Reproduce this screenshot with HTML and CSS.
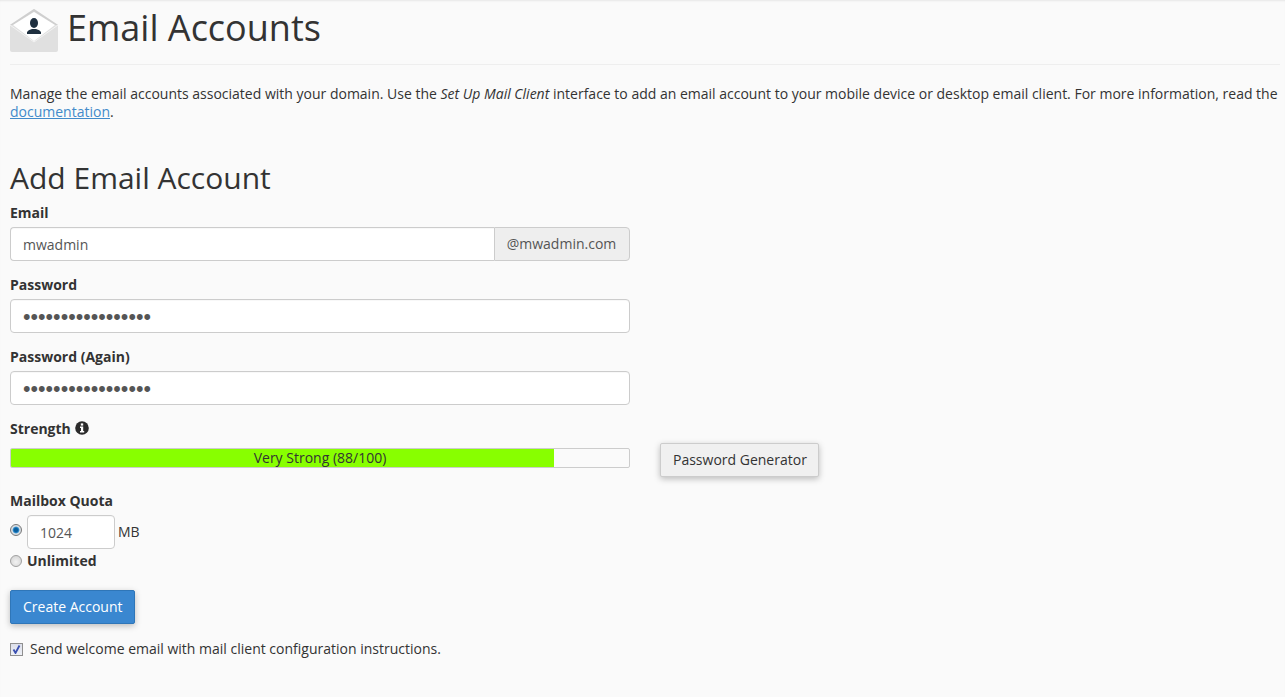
FILE: index.html
```html
<!DOCTYPE html>
<html lang="en">
<head>
<meta charset="utf-8">
<title>Email Accounts</title>
<link rel="stylesheet" href="styles.css">
</head>
<body>
<main class="page">
  <header class="page-header">
    <svg class="page-icon" width="48" height="44" viewBox="0 0 48 44" aria-hidden="true">
      <path d="M0 16 L24 0 L48 16 L48 41 Q48 43 46 43 L2 43 Q0 43 0 41 Z" fill="#e0e0e0"/>
      <path d="M24 0 L48 16 L45 16 L24 2.5 L3 16 L0 16 Z" fill="#cfcfcf"/>
      <path d="M3 16 L24 3 L45 16 L24 32 Z" fill="#fff"/>
      <path d="M0 16 L24 33 L48 16" fill="none" stroke="#f2f2f2" stroke-width="1"/>
      <ellipse cx="24" cy="14" rx="4" ry="5" fill="#1f3040"/>
      <path d="M17 25 L17 23 Q18 21 22 20 L26 20 Q30 21 31 23 L31 25 Z" fill="#1f3040"/>
    </svg>
    <h1 class="page-title">Email Accounts</h1>
  </header>
  <p class="intro">Manage the email accounts associated with your domain. Use the <em>Set Up Mail Client</em> interface to add an email account to your mobile device or desktop email client. For more information, read the <a href="#">documentation</a>.</p>
  <h2 class="section-title">Add Email Account</h2>
  <form class="form">
    <div class="group">
      <label class="label">Email</label>
      <div class="input-group">
        <input class="input input-joined" type="text" value="mwadmin">
        <span class="addon">@mwadmin.com</span>
      </div>
    </div>
    <div class="group">
      <label class="label">Password</label>
      <input class="input input-secret" type="password" value="aaaaaaaaaaaaaaaaa">
    </div>
    <div class="group">
      <label class="label">Password (Again)</label>
      <input class="input input-secret" type="password" value="aaaaaaaaaaaaaaaaa">
    </div>
    <div class="group group-strength">
      <label class="label">Strength
        <svg class="info" width="14" height="14" viewBox="0 0 14 14" aria-hidden="true">
          <circle cx="7" cy="7" r="6.8" fill="#2b2b2b"/>
          <rect x="5.8" y="2.4" width="2.4" height="2.2" fill="#fff"/>
          <path d="M5 5.6 H8.2 V10 H9.2 V11.4 H5 V10 H6 V7 H5 Z" fill="#fff"/>
        </svg>
      </label>
      <div class="strength-row">
        <div class="progress">
          <div class="progress-bar" style="width: 87.8%"></div>
          <span class="progress-text">Very Strong (88/100)</span>
        </div>
        <button class="btn btn-default" type="button">Password Generator</button>
      </div>
    </div>
    <div class="group group-quota">
      <label class="label">Mailbox Quota</label>
      <div class="quota-row">
        <input class="radio" type="radio" name="quota" checked>
        <input class="input input-quota" type="text" value="1024">
        <span class="unit">MB</span>
      </div>
      <div class="unlimited-row">
        <input class="radio" type="radio" name="quota">
        <strong>Unlimited</strong>
      </div>
    </div>
    <button class="btn btn-primary" type="button">Create Account</button>
    <div class="welcome">
      <span class="checkbox">
        <svg width="9" height="9" viewBox="0 0 9 9" aria-hidden="true"><path d="M1.5 4.5 L3.5 8 L7.5 0.5" fill="none" stroke="#3a4fb0" stroke-width="1.8"/></svg>
      </span>
      <span>Send welcome email with mail client configuration instructions.</span>
    </div>
  </form>
</main>
</body>
</html>
```
FILE: styles.css
```css
* { box-sizing: border-box; }
html, body { margin: 0; height: 100%; }
body {
  background: #fafafa;
  color: #333;
  font-family: "Open Sans", sans-serif;
  font-size: 14px;
  line-height: 20px;
  box-shadow: inset 0 2px 2px -1px rgba(0,0,0,.08);
  overflow: hidden;
}
.page { padding: 9px 5px 0 10px; }
.page-header {
  display: flex;
  align-items: flex-start;
  gap: 9px;
  height: 56px;
  border-bottom: 1px solid #eee;
}
.page-title {
  margin: 0;
  font-size: 36px;
  font-weight: 400;
  line-height: 38px;
}
.intro { margin: 20px 0 0; line-height: 18px; }
.intro a { color: #428bca; }
.section-title {
  margin: 39px 0 0;
  font-size: 30px;
  font-weight: 400;
  line-height: 36px;
}
.form { width: 620px; margin-top: 7px; }
.group { margin-bottom: 14px; }
.label { display: block; font-weight: 700; line-height: 20px; margin-bottom: 4px; }
.info { vertical-align: -1px; margin-left: 1px; }
.input-group { display: flex; }
.input {
  display: block;
  width: 100%;
  height: 34px;
  padding: 6px 12px;
  background: #fff;
  border: 1px solid #ccc;
  border-radius: 4px;
  color: #555;
  font: inherit;
  box-shadow: inset 0 1px 1px rgba(0,0,0,.03);
}
.input-secret { font-family: "Liberation Sans", sans-serif; font-size: 21.5px; padding: 2px 12px 0; }
.input-joined { flex: 1; border-radius: 4px 0 0 4px; border-right: 0; }
.addon {
  width: 136px;
  height: 34px;
  padding: 6px 12px 6px 11px;
  background: #eee;
  border: 1px solid #ccc;
  border-radius: 0 4px 4px 0;
  color: #555;
  text-align: center;
  white-space: nowrap;
}
.group-strength { margin-bottom: 0; }
.strength-row { display: flex; align-items: flex-start; gap: 30px; width: 830px; height: 34px; }
.progress {
  position: relative;
  flex: 0 0 620px;
  height: 20px;
  margin-top: 5px;
  background: #fafafa;
  border: 1px solid #ccc;
  border-radius: 2px;
  overflow: hidden;
}
.progress-bar { height: 100%; background: #8f0; }
.progress-text {
  position: absolute;
  inset: 0;
  text-align: center;
  line-height: 18px;
}
.btn {
  height: 34px;
  padding: 6px 12px;
  border-radius: 2px;
  font: inherit;
  white-space: nowrap;
  box-shadow: 0 2px 6px rgba(0,0,0,.25);
}
.btn-default { width: 159px; background: #f0f0f0; border: 1px solid #ccc; color: #333; }
.btn-primary { display: block; width: 125px; background: #3a87d0; border: 1px solid #2f76b8; color: #fff; }
.group-quota { margin-top: 14px; margin-bottom: 19px; }
.quota-row { display: flex; align-items: center; gap: 5px; height: 34px; }
.quota-row .radio { align-self: flex-start; margin-top: 9px; }
.input-quota { width: 88px; flex: none; margin-right: -2px; }
.unlimited-row { display: flex; align-items: center; gap: 5px; margin-top: 2px; height: 20px; }
.radio {
  appearance: none;
  flex: none;
  width: 12px;
  height: 12px;
  margin: 0;
  border: 1px solid #a0a0a0;
  border-radius: 50%;
  background: radial-gradient(circle at 50% 60%, #f2f2f2, #cfcfcf);
}
.radio:checked { background: radial-gradient(circle, #0a5f9e 0 1.8px, #2d8ccf 2.8px, #d6dde3 3.8px); border-color: #777; }
.welcome { display: flex; align-items: center; gap: 7px; margin-top: 15px; }
.checkbox {
  display: flex;
  align-items: center;
  justify-content: center;
  width: 13px;
  height: 13px;
  border: 1px solid #8f8f8f;
  background: linear-gradient(#dcdfea, #eef0f6);
}
```
